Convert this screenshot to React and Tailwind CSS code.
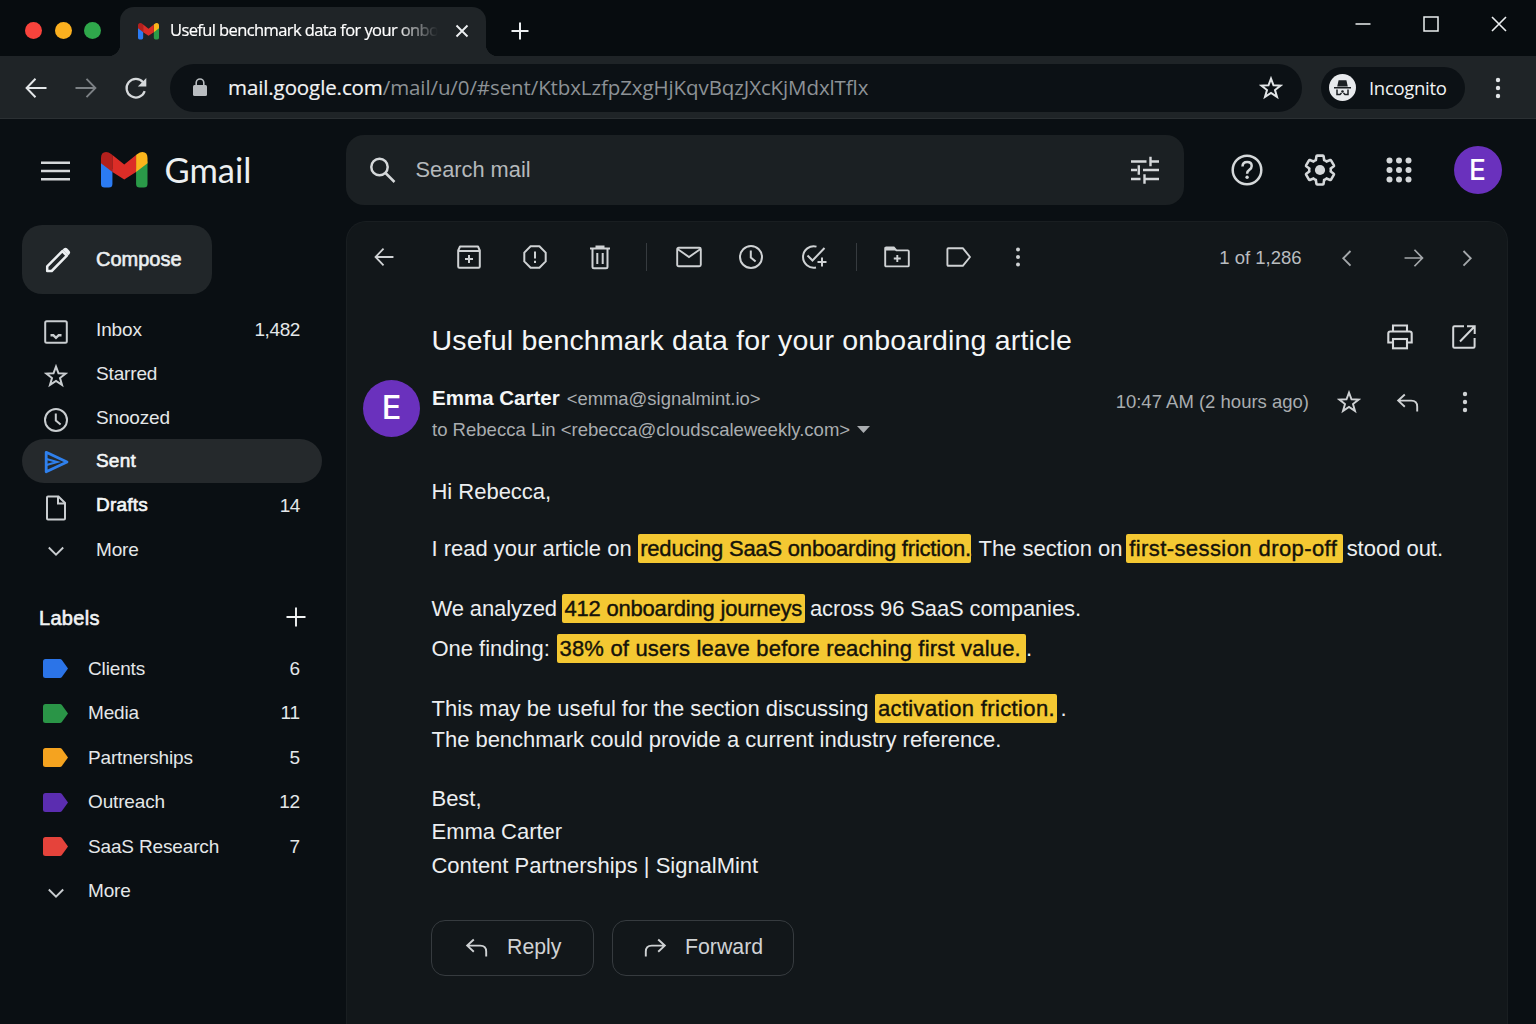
// ── ICONS ─────────────────────────────────────────────────
const Icon = ({ w = 24, h = 24, sw = 2, className = '', children }) => (
  <svg
    width={w}
    height={h}
    viewBox={`0 0 ${w} ${h}`}
    fill="none"
    stroke="currentColor"
    strokeWidth={sw}
    className={`shrink-0 ${className}`}
  >
    {children}
  </svg>
)

const ArrowLeft = ({ className, sw = 2 }) => (
  <Icon w={22} h={22} sw={sw} className={className}>
    <path d="M21.5 11H2M10.5 1.8 1.6 11l8.9 9.2" />
  </Icon>
)

const Chevron = ({ className, d }) => (
  <Icon w={20} h={20} sw={1.9} className={className}>
    <path d={d} />
  </Icon>
)

const Dots = ({ className, gap = 8, r = 2.2 }) => (
  <Icon w={8} h={24} className={className}>
    <g fill="currentColor" stroke="none">
      <circle cx="4" cy={12 - gap} r={r} />
      <circle cx="4" cy="12" r={r} />
      <circle cx="4" cy={12 + gap} r={r} />
    </g>
  </Icon>
)

const Star = ({ className, sw = 1.9 }) => (
  <Icon sw={sw} className={className}>
    <path d="m12 2.600 2.500 6.700 7.100.3-5.600 4.400 2 6.900-6-4-6 4 2-6.900-5.600-4.400 7.100-.3z" />
  </Icon>
)

const Clock = ({ className }) => (
  <Icon w={26} h={26} sw={2} className={className}>
    <circle cx="13" cy="13" r="11" />
    <path d="M12.8 6.5v7l4.8 4" />
  </Icon>
)

const ReplyArrow = ({ className }) => (
  <Icon sw={1.9} className={className}>
    <path d="M8.8 3.5 2.2 9.6l6.600 6.100M2.600 9.600h12.600q6 0 6 6v4.800" />
  </Icon>
)

const GmailLogo = ({ w, h }) => (
  <svg width={w} height={h} viewBox="0 0 46 35" preserveAspectRatio="none" className="shrink-0">
    <path d="M0 9v22.500Q0 35 3.500 35H7.800q3.500 0 3.500-3.500V17z" fill="#2b7bf3" />
    <path d="M46 9v22.500Q46 35 42.500 35H38.200q-3.500 0-3.500-3.500V17z" fill="#2a9a48" />
    <path d="M0 6Q0 0 5 0q2.600 0 5 2l1.300 1v16.600L0 11z" fill="#b3201d" />
    <path d="M46 6Q46 0 41 0q-2.600 0-5 2l-1.300 1v16.600L46 11z" fill="#fbb51c" />
    <path d="M11.300 3 23 12.300 34.700 3v16.600L23 27 11.300 19.600z" fill="#dc2d27" />
  </svg>
)

const GEAR =
  'M19.14 12.94c.04-.3.06-.61.06-.94 0-.32-.02-.64-.07-.94l2.03-1.58c.18-.14.23-.41.12-.61l-1.92-3.32c-.12-.22-.37-.29-.59-.22l-2.39.96c-.5-.38-1.03-.7-1.62-.94l-.36-2.54c-.04-.24-.24-.41-.48-.41h-3.84c-.24 0-.43.17-.47.41l-.36 2.54c-.59.24-1.13.57-1.62.94l-2.39-.96c-.22-.08-.47 0-.59.22L2.74 8.87c-.12.21-.08.47.12.61l2.03 1.58c-.05.3-.09.63-.09.94s.02.64.07.94l-2.03 1.58c-.18.14-.23.41-.12.61l1.92 3.32c.12.22.37.29.59.22l2.39-.96c.5.38 1.03.7 1.62.94l.36 2.54c.05.24.24.41.48.41h3.84c.24 0 .44-.17.47-.41l.36-2.54c.59-.24 1.13-.56 1.62-.94l2.39.96c.22.08.47 0 .59-.22l1.92-3.32c.12-.22.07-.47-.12-.61z'

// ── DATA ──────────────────────────────────────────────────
const folders = [
  {
    name: 'Inbox',
    count: '1,482',
    icon: (
      <Icon>
        <rect x="1.200" y="1.200" width="21.600" height="21.600" rx="1.500" />
        <path d="M6.500 15.200h2.800l2.700 2.600 2.700-2.600h2.800" strokeWidth="2.500" />
      </Icon>
    ),
  },
  { name: 'Starred', icon: <Star sw={2} /> },
  { name: 'Snoozed', icon: <Clock /> },
  {
    name: 'Sent',
    active: true,
    icon: (
      <Icon w={26} sw={2.800} className="-mt-1 ml-px text-[#2f80ed]">
        <path d="M2.200 2.300 23 12 2.200 21.700z" strokeLinejoin="round" />
        <path d="M2.500 9 13 12 2.500 15" strokeWidth="2.200" />
      </Icon>
    ),
  },
  {
    name: 'Drafts',
    strong: true,
    count: '14',
    icon: (
      <Icon w={22} h={26}>
        <path d="M2 2.500q0-1 1-1h10.500L20 8v15.500q0 1-1 1H3q-1 0-1-1z" />
        <path d="M13 1.500V8.500H20" />
      </Icon>
    ),
  },
  { name: 'More', icon: <Chevron d="M2.800 6.500 10 13.700l7.200-7.200" /> },
]

const labels = [
  { name: 'Clients', count: 6, color: 'text-[#2b74e8]' },
  { name: 'Media', count: 11, color: 'text-[#2a9547]' },
  { name: 'Partnerships', count: 5, color: 'text-[#f5a31f]' },
  { name: 'Outreach', count: 12, color: 'text-[#5b2db0]' },
  { name: 'SaaS Research', count: 7, color: 'text-[#e5433b]' },
]

// ── BROWSER CHROME ────────────────────────────────────────
const TitleBar = () => (
  <div className="flex h-14 shrink-0 bg-[#070c0f] text-[#eceff1]">
    <div className="flex w-[120px] items-center gap-[12.500px] pl-[25px] pt-1">
      <span className="size-[17px] rounded-full bg-[#f9433c]" />
      <span className="size-[17px] rounded-full bg-[#fbb01f]" />
      <span className="size-[17px] rounded-full bg-[#2fa84b]" />
    </div>

    <div className="relative mt-[7px] flex w-[366px] items-center rounded-t-[14px] bg-[#1f2427] pl-[18px]">
      {/* flared feet of the tab */}
      <span className="absolute -left-3 bottom-0 size-3 bg-[radial-gradient(circle_at_0_0,#070c0f_12px,#1f2427_12.500px)]" />
      <span className="absolute -right-3 bottom-0 size-3 bg-[radial-gradient(circle_at_100%_0,#070c0f_12px,#1f2427_12.500px)]" />
      <GmailLogo w={21} h={16.500} />
      <span className="-mt-0.5 ml-[11px] w-[268px] whitespace-nowrap font-['Open_Sans',sans-serif] text-[16.500px] tracking-[-0.6px] text-white [-webkit-text-stroke:0.2px] [mask-image:linear-gradient(90deg,#000_84%,transparent_100%)]">
        Useful benchmark data for your onbo
      </span>
      <Icon w={14} h={14} sw={1.9} className="-mt-0.5 ml-[17px]">
        <path d="m1.500 1.500 11 11m0-11-11 11" />
      </Icon>
    </div>

    <Icon w={18} h={18} sw={2} className="ml-[25px] mt-[22px]">
      <path d="M9 .5v17M.5 9h17" />
    </Icon>

    <div className="ml-auto flex pr-[29px] pt-4">
      <Icon w={16} h={16} sw={1.500}>
        <path d="M.5 8h15" />
      </Icon>
      <Icon w={16} h={16} sw={1.500} className="ml-[52px]">
        <rect x="1" y="1" width="14" height="14" />
      </Icon>
      <Icon w={16} h={16} sw={1.600} className="ml-[52px]">
        <path d="m1 1 14 14m0-14L1 15" />
      </Icon>
    </div>
  </div>
)

const AddressBar = () => (
  <div className="flex h-[63px] shrink-0 items-center border-b border-[#2b3033] bg-[#1f2427] pt-px text-[#e3e6e8]">
    <ArrowLeft className="ml-[25px]" />
    <ArrowLeft className="ml-[28px] rotate-180 text-[#7c8185]" sw={1.900} />
    <Icon w={24} h={24} sw={2.200} className="ml-[27px] text-[#d6d9db]">
      <path d="M20.700 15.200A9.300 9.300 0 1 1 19 6.200" />
      <path d="M22.300 2v8.500h-8.500z" fill="currentColor" stroke="none" />
    </Icon>

    <div className="ml-[22px] flex h-12 w-[1132px] items-center rounded-full bg-[#0c1115] pl-[23px] pr-[19px]">
      <Icon w={14} h={19} className="text-[#b9bdc0]">
        <rect x="0" y="7" width="14" height="11" rx="1.500" fill="currentColor" stroke="none" />
        <path d="M3.200 8V4.800a3.800 3.800 0 0 1 7.600 0V8" strokeWidth="1.600" />
      </Icon>
      <span className="ml-[21px] whitespace-nowrap font-['Open_Sans',sans-serif] text-[20.500px] tracking-[-0.1px] text-[#8d9296]">
        <span className="text-[#f1f3f4] [-webkit-text-stroke:0.2px]">mail.google.com</span>/mail/u/0/#sent/KtbxLzfpZxgHjKqvBqzJXcKjMdxlTflx
      </span>
      <Star className="ml-auto" sw={2} />
    </div>

    <div className="ml-[19px] flex h-[42px] w-[144px] items-center rounded-full bg-[#0c1115] pl-2">
      <svg width="27" height="27" viewBox="0 0 27 27" className="shrink-0">
        <circle cx="13.500" cy="13.500" r="13.500" fill="#e8eaed" />
        <path d="M9.600 6.200h7.800l1.400 6.300H8.200zM5 13h17v1.600H5z" fill="#1b1f23" />
        <path d="M8 15.500v5h3l1.500-1.500M19 15.500v5h-3L14.500 19" fill="none" stroke="#1b1f23" strokeWidth="1.500" />
        <circle cx="13.500" cy="17.500" r="1.300" fill="#1b1f23" />
      </svg>
      <span className="ml-[13px] font-['Open_Sans',sans-serif] text-[18.500px] tracking-[-0.3px] text-[#f1f3f4]">Incognito</span>
    </div>
    <Dots className="ml-[29px]" />
  </div>
)

// ── GMAIL HEADER ──────────────────────────────────────────
const Header = () => (
  <div className="flex h-[102px] shrink-0 items-center text-[#d5d8da]">
    <Icon w={29} h={20} sw={2.600} className="ml-[41px] mt-px">
      <path d="M0 1.800h29M0 10h29M0 18.200h29" />
    </Icon>
    <div className="ml-[31px]">
      <GmailLogo w={46.500} h={35.500} />
    </div>
    <span className="ml-[17px] w-[90px] font-[Lato,sans-serif] text-[34.500px] leading-none text-[#eceff1]">Gmail</span>

    <div className="ml-[91px] flex h-[70px] w-[838px] items-center rounded-[18px] bg-[#1b2023] pl-[23px] pr-[25px]">
      <Icon w={27} h={27} sw={2.500}>
        <circle cx="10.500" cy="10" r="8.200" />
        <path d="m16.500 16 9 9" />
      </Icon>
      <span className="ml-5 text-[21.800px] text-[#b5b9bc]">Search mail</span>
      <Icon w={28} h={28} sw={2.400} className="ml-auto">
        <path d="M0 5.500h15.500M19.500 5.500H28M19.500 .8v9.400M0 14h6M12 14h16M7.800 9.300v9.400M0 23h9.500M13.500 23H28M13.500 18.300v9.400" />
      </Icon>
    </div>

    <Icon w={32} h={32} sw={2.500} className="ml-[47px]">
      <circle cx="16" cy="16" r="14.300" />
      <path d="M11.500 12.600q0-4.600 4.700-4.600 4.500 0 4.500 4.100 0 2.300-2.400 3.800-2.200 1.400-2.200 3.900" />
      <circle cx="16.100" cy="23.300" r="1.700" fill="currentColor" stroke="none" />
    </Icon>
    <svg width="36" height="36" viewBox="0 0 24 24" fill="none" stroke="currentColor" strokeWidth="1.700" className="ml-[39px] shrink-0">
      <path d={GEAR} />
      <circle cx="12" cy="12" r="3.400" fill="currentColor" stroke="none" />
    </svg>
    <Icon w={26} h={26} className="ml-[48px]">
      <g fill="currentColor" stroke="none">
        {[3.500, 13, 22.500].map((y) =>
          [3.500, 13, 22.500].map((x) => <circle key={`${x}-${y}`} cx={x} cy={y} r="3" />)
        )}
      </g>
    </Icon>
    <div className="ml-[42px] flex size-12 items-center justify-center rounded-full bg-[#6a31bd] font-[Inter,sans-serif] text-[28px] font-medium text-white">
      E
    </div>
  </div>
)

// ── SIDEBAR ───────────────────────────────────────────────
const Sidebar = () => (
  <div className="w-[346px] shrink-0 pl-[22px] text-[19px] tracking-[-0.15px] text-[#e4e7e9]">
    <button className="mt-1 flex h-[69px] w-[190px] items-center rounded-[20px] bg-[#212629] pl-[23px] text-[20px] tracking-normal text-[#eceff1]">
      <Icon w={26} h={26} sw={2.500}>
        <path d="M2.200 24v-4.700L17.300 4.200l4.500 4.500L6.700 24z" strokeLinejoin="round" />
        <path d="m17.500 2.800 1.500-1.500q1.500-1 3 0l2.600 2.600q1.200 1.600 0 3.200l-1.500 1.500z" fill="currentColor" stroke="none" />
      </Icon>
      <span className="-mt-0.5 ml-[25px] [-webkit-text-stroke:0.6px]">Compose</span>
    </button>

    <div className="mt-[13px] flex flex-col">
      {folders.map((f) => (
        <div
          key={f.name}
          className={`flex h-[43.900px] w-[300px] items-center rounded-full pr-[22px] ${f.active ? 'bg-[#25292c]' : ''}`}
        >
          <span className="ml-[18px] mt-[6px] flex w-8 justify-center text-[#c9cdd0]">{f.icon}</span>
          <span
            className={
              f.active || f.strong
                ? 'ml-[24px] mt-[2px] tracking-[0.2px] text-[#f4f6f7] [-webkit-text-stroke:0.6px]'
                : 'ml-[24px] mt-[3px]'
            }
          >
            {f.name}
          </span>
          <span className="ml-auto mt-[3px] tracking-[-0.4px]">{f.count}</span>
        </div>
      ))}
    </div>

    <div className="mt-[25px] flex h-[44px] items-center pl-[17px] pr-[40px] text-[#f1f3f4]">
      <span className="mt-px text-[20px] tracking-[0.3px] [-webkit-text-stroke:0.6px]">Labels</span>
      <Icon w={20} h={20} sw={1.900} className="ml-auto">
        <path d="M10 .5v19M.5 10h19" />
      </Icon>
    </div>

    <div className="mt-[7px] flex flex-col">
      {labels.map((l) => (
        <div key={l.name} className="flex h-[44.500px] w-[300px] items-center pl-[21px] pr-[22px]">
          <Icon w={25} h={19} className={l.color}>
            <path d="M2.500 0H17q1 0 1.700.8L25 9.500l-6.300 8.700q-.7.800-1.700.8H2.500Q0 19 0 16.500v-14Q0 0 2.500 0z" fill="currentColor" stroke="none" />
          </Icon>
          <span className="ml-[20px] mt-px">{l.name}</span>
          <span className="ml-auto mt-px">{l.count}</span>
        </div>
      ))}
      <div className="flex h-[44.500px] items-center pl-[24px]">
        <Chevron d="M2.800 6.500 10 13.700l7.200-7.200" className="mt-1 text-[#c9cdd0]" />
        <span className="ml-[22px] mt-px">More</span>
      </div>
    </div>
  </div>
)

// ── MESSAGE ───────────────────────────────────────────────
const Cell = ({ className = '', children }) => (
  <span className={`flex w-7 shrink-0 items-center justify-center ${className}`}>{children}</span>
)

const Toolbar = () => (
  <div className="flex h-[70px] items-center pl-[23px] pr-[26px] text-[#cfd2d4]">
    <Cell><ArrowLeft className="scale-90" /></Cell>
    <Cell className="ml-[57px]">
      <Icon w={24} h={24}>
        <path d="M1.200 5.500 3 1.500h18l1.800 4v16q0 1.200-1.200 1.200H2.400q-1.200 0-1.200-1.200zM1.200 6h21.600" strokeLinejoin="round" />
        <path d="M12 10v8M8 14h8" />
      </Icon>
    </Cell>
    <Cell className="ml-[37.500px]">
      <Icon w={24} h={24}>
        <path d="M7.600 1.300h8.800l6.300 6.300v8.800l-6.300 6.300H7.600l-6.300-6.300V7.600z" strokeLinejoin="round" />
        <path d="M12 6.500v7M12 15.800v2.300" />
      </Icon>
    </Cell>
    <Cell className="ml-[37.500px]">
      <Icon w={22} h={25}>
        <path d="M1 3.500h20M7.500 3V1.500h7V3M3.500 4v17.800q0 1.500 1.500 1.500h12q1.500 0 1.500-1.500V4M8.300 8v11M13.700 8v11" />
      </Icon>
    </Cell>
    <span className="ml-[31.500px] h-7 w-px bg-[#363b3f]" />
    <Cell className="ml-[28px]">
      <Icon w={26} h={22} sw={1.900}>
        <rect x="1.200" y="1.800" width="23.600" height="18.400" rx="1.500" />
        <path d="m1.500 3 11.500 8L24.500 3" />
      </Icon>
    </Cell>
    <Cell className="ml-[34.500px]"><Clock /></Cell>
    <Cell className="ml-[35px]">
      <Icon w={28} h={26}>
        <path d="M16.500 2.600A10.700 10.700 0 1 0 16 23.400" />
        <path d="m7.500 11.500 5 5L24.500 4M22 13.500v9M17.500 18h9" />
      </Icon>
    </Cell>
    <span className="ml-[27.500px] h-7 w-px bg-[#363b3f]" />
    <Cell className="ml-[26px]">
      <Icon w={26} h={22} sw={1.900}>
        <path d="M1.200 2.400q0-1 1-1h7.600l2.600 3h11.400q1 0 1 1v14q0 1-1 1H2.200q-1 0-1-1z" />
        <path d="M1.500 1.500H10l2 2.900H1.500z" fill="currentColor" stroke="none" />
        <path d="M13.300 9v7M9.800 12.500h7" />
      </Icon>
    </Cell>
    <Cell className="ml-[34px]">
      <Icon w={26} h={22} sw={1.900}>
        <path d="M2.400 2.200h14.400L24 11l-7.200 8.800H2.400q-1 0-1-1V3.200q0-1 1-1z" strokeLinejoin="round" />
      </Icon>
    </Cell>
    <Cell className="ml-[31px]"><Dots gap={7.500} r={2} /></Cell>

    <span className="ml-auto mt-0.5 text-[18.500px] text-[#b9bdc0]">1 of 1,286</span>
    <Cell className="ml-[31px] mt-px text-[#a4a8ab]"><Chevron d="m13.500 3-7.200 7.300 7.200 7.300" /></Cell>
    <Cell className="ml-[39.500px] mt-px text-[#a4a8ab]"><ArrowLeft className="rotate-180 scale-90" sw={1.900} /></Cell>
    <Cell className="ml-[25px] mt-px text-[#a4a8ab]"><Chevron d="m6.500 3 7.200 7.300-7.200 7.300" /></Cell>
  </div>
)

const Line = ({ className = '', children }) => (
  <div className={`flex h-[30px] items-center whitespace-pre ${className}`}>{children}</div>
)

const Mark = ({ className = '', children }) => (
  <mark className={`relative flex h-[29px] items-center rounded-[2px] bg-[#f4c832] pl-[2.500px] text-[#15130a] [-webkit-text-stroke:0.4px] ${className}`}>
    {children}
  </mark>
)

const Message = () => (
  <div className="flex w-[1162px] flex-col rounded-t-[20px] border border-b-0 border-[#191e21] bg-[#12171a]">
    <Toolbar />

    <div className="flex h-[88px] items-center pl-[84.500px] pr-[29px] pt-2">
      <h1 className="text-[28.500px] tracking-[0.17px] text-[#f4f6f7]">Useful benchmark data for your onboarding article</h1>
      <Cell className="mb-[7px] ml-auto text-[#d5d8da]">
        <Icon w={26} h={26} sw={2.100}>
          <path d="M6 7V1.500h14V7M6 18.500H1.300V9.500Q1.300 7.500 3.300 7.500h19.400q2 0 2 2v9H20" />
          <rect x="6" y="15" width="14" height="9.300" />
        </Icon>
      </Cell>
      <Cell className="mb-[7px] ml-[36px] text-[#d5d8da]">
        <Icon w={24} h={24}>
          <path d="M12 1.300H2.500q-1.300 0-1.300 1.300v18.800q0 1.300 1.300 1.300h18.800q1.300 0 1.300-1.300V13M15 1.300h7.700V9M8 16.500 22.500 1.500" />
        </Icon>
      </Cell>
    </div>

    <div className="flex h-[57px] pl-[16px] pr-[28.500px]">
      <div className="flex size-[57px] items-center justify-center rounded-full bg-[#6a31bd] font-[Inter,sans-serif] text-[32.500px] font-medium text-white">
        E
      </div>
      <div className="ml-[12px] mt-[3px] text-[18.550px] text-[#a9adb0]">
        <div className="flex h-[31px] items-center">
          <span className="text-[20.500px] font-bold text-[#f4f6f7]">Emma Carter</span>
          <span className="ml-[7px] text-[18.450px]">&lt;emma@signalmint.io&gt;</span>
        </div>
        <div className="flex h-[31px] items-center">
          to Rebecca Lin &lt;rebecca@cloudscaleweekly.com&gt;
          <svg width="13" height="7" viewBox="0 0 13 7" className="ml-[7px] fill-[#a9adb0]">
            <path d="M0 0h13L6.500 7z" />
          </svg>
        </div>
      </div>
      <div className="ml-auto mt-2 flex h-7 items-center text-[#cfd2d4]">
        <span className="text-[18.500px] text-[#a9adb0]">10:47 AM (2 hours ago)</span>
        <Cell className="ml-[26px]"><Star /></Cell>
        <Cell className="ml-[30.500px]"><ReplyArrow className="mt-0.5" /></Cell>
        <Cell className="ml-[29px]"><Dots /></Cell>
      </div>
    </div>

    <div className="pl-[84.500px] pt-[39.500px] text-[22px] tracking-[-0.02px] text-[#eceef0]">
      <Line>Hi Rebecca,</Line>
      <Line className="mt-[27px]">
        I read your article on <Mark className="w-[333px] tracking-[-0.2px]">reducing SaaS onboarding friction.</Mark>
        <span className="-ml-[4px]">. The section on </span>
        <Mark className="-ml-[3px] w-[217px] pl-[3.500px] tracking-[0.42px]">first-session drop-off</Mark>
        <span className="ml-[4px]">stood out.</span>
      </Line>
      <Line className="mt-[30px] tracking-[-0.12px]">
        We analyzed <Mark className="-ml-px w-[243px] tracking-[-0.2px]">412 onboarding journeys</Mark>
        <span className="ml-[5px]">across 96 SaaS companies.</span>
      </Line>
      <Line className="mt-[10px]">
        One finding: <Mark className="ml-px w-[469px] tracking-[0.19px]">38% of users leave before reaching first value.</Mark>.
      </Line>
      <Line className="mt-[29.500px]">
        This may be useful for the section discussing <Mark className="ml-px w-[182px] tracking-[0.35px]">activation friction.</Mark>
        <span className="ml-[3px]">.</span>
      </Line>
      <Line className="mt-px">The benchmark could provide a current industry reference.</Line>
      <Line className="mt-[29.500px]">Best,</Line>
      <Line className="mt-[3px]">Emma Carter</Line>
      <Line className="mt-[3.500px]">Content Partnerships | SignalMint</Line>
    </div>

    <div className="ml-[84px] mt-[39.500px] flex gap-[18px] text-[21.300px] text-[#cfd2d4]">
      <button className="flex h-14 w-[163px] items-center rounded-[14px] border border-[#363b3f] pl-[33px]">
        <ReplyArrow />
        <span className="ml-[18px] mt-px">Reply</span>
      </button>
      <button className="flex h-14 w-[182px] items-center rounded-[14px] border border-[#363b3f] pl-[30px]">
        <ReplyArrow className="-scale-x-100" />
        <span className="ml-[18px] mt-px">Forward</span>
      </button>
    </div>
  </div>
)

export default function App() {
  return (
    <div className="flex h-[1024px] w-[1536px] flex-col overflow-hidden bg-[#0a0f13] font-['Liberation_Sans',Arial,sans-serif]">
      <TitleBar />
      <AddressBar />
      <Header />
      <div className="flex flex-1">
        <Sidebar />
        <Message />
      </div>
    </div>
  )
}
